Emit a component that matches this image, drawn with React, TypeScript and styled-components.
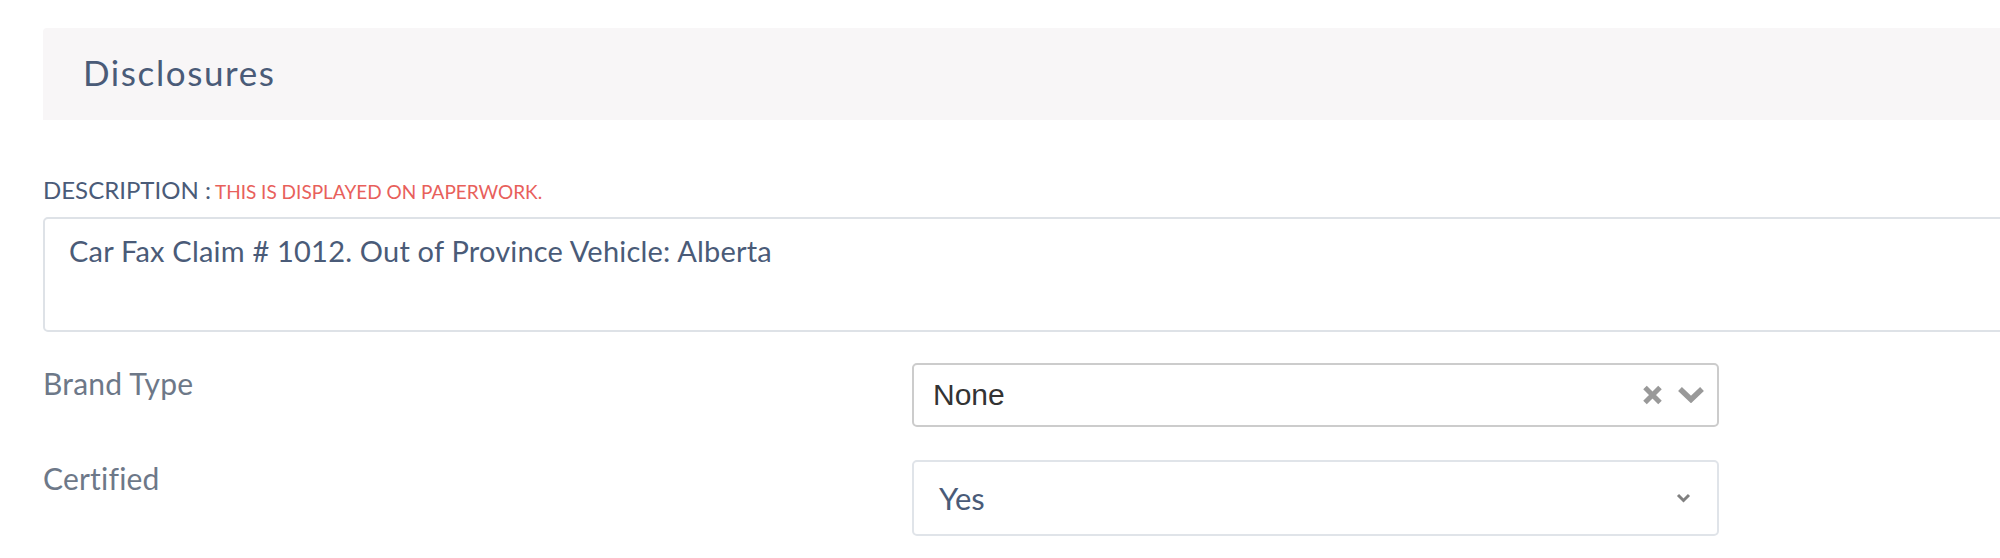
import React from 'react';
import styled, { createGlobalStyle } from 'styled-components';

const GlobalStyle = createGlobalStyle`
  html, body {
    margin: 0;
    padding: 0;
    background: #ffffff;
    overflow: hidden;
  }
  body {
    font-family: Lato, "Open Sans", sans-serif;
  }
`;

const Page = styled.div`
  width: 2000px;
  height: 558px;
  box-sizing: border-box;
  padding: 28px 0 0 43px;
  overflow: hidden;
`;

const Content = styled.div`
  width: 1990px;
`;

const SectionHeader = styled.div`
  height: 92px;
  box-sizing: border-box;
  display: flex;
  align-items: center;
  padding: 0 0 5px 40px;
  background: #f8f6f7;
  border-radius: 4px 0 0 0;
`;

const SectionTitle = styled.h2`
  margin: 0;
  font-size: 35px;
  font-weight: 400;
  letter-spacing: 1.6px;
  color: #4a5b78;
`;

const FieldLabel = styled.div`
  margin-top: 56px;
  display: flex;
  align-items: baseline;
  gap: 4px;
  line-height: 1.2;
`;

const LabelMain = styled.span`
  font-size: 24px;
  color: #4a5b78;
  text-transform: uppercase;
`;

const LabelHint = styled.span`
  font-size: 19px;
  color: #e8605b;
  text-transform: uppercase;
`;

const TextArea = styled.textarea`
  display: block;
  width: 100%;
  height: 115px;
  margin-top: 12px;
  box-sizing: border-box;
  padding: 13px 24px;
  border: 2px solid #dee2e7;
  border-radius: 5px;
  resize: none;
  outline: none;
  font-family: Lato, "Open Sans", sans-serif;
  font-size: 29px;
  letter-spacing: 0.2px;
  line-height: 1.3;
  color: #4a5b78;
  background: #fff;
`;

const FormRow = styled.div<{ $gap: number }>`
  display: grid;
  grid-template-columns: 869px 807px;
  margin-top: ${({ $gap }) => $gap}px;
`;

const RowLabel = styled.div<{ $pad: number }>`
  padding-top: ${({ $pad }) => $pad}px;
  font-size: 30px;
  letter-spacing: 0.2px;
  line-height: 1.2;
  color: #6d7888;
`;

const SelectBox = styled.div<{ $variant: 'clearable' | 'plain' }>`
  display: flex;
  align-items: center;
  box-sizing: border-box;
  height: ${({ $variant }) => ($variant === 'clearable' ? 64 : 76)}px;
  padding: ${({ $variant }) => ($variant === 'clearable' ? '0 12px 0 19px' : '0 26px 0 25px')};
  border: 2px solid ${({ $variant }) => ($variant === 'clearable' ? '#cccccc' : '#e0e4e9')};
  border-radius: 5px;
  background: #fff;
`;

const SelectValue = styled.span<{ $variant: 'clearable' | 'plain' }>`
  flex: 1;
  font-family: ${({ $variant }) =>
    $variant === 'clearable' ? '"Liberation Sans", Arial, sans-serif' : 'Lato, "Open Sans", sans-serif'};
  font-size: ${({ $variant }) => ($variant === 'clearable' ? 30 : 31)}px;
  color: ${({ $variant }) => ($variant === 'clearable' ? '#333333' : '#4a5b78')};
`;

const IconGroup = styled.span`
  display: flex;
  align-items: center;
  gap: 14px;
`;

const ClearIcon = () => (
  <svg width="21" height="20" viewBox="0 0 21 20" aria-hidden="true">
    <path d="M3 2.5 L18 17.5 M18 2.5 L3 17.5" stroke="#999999" strokeWidth="5" strokeLinecap="butt" fill="none" />
  </svg>
);

const HeavyChevron = () => (
  <svg width="28" height="17" viewBox="0 0 28 17" aria-hidden="true">
    <path d="M3 3 L14 13.5 L25 3" stroke="#999999" strokeWidth="5.5" strokeLinejoin="miter" fill="none" />
  </svg>
);

const SmallChevron = () => (
  <svg width="15" height="10" viewBox="0 0 15 10" aria-hidden="true">
    <path d="M2 2 L7.5 7.5 L13 2" stroke="#808080" strokeWidth="3" fill="none" />
  </svg>
);

export default function App() {
  return (
    <>
      <GlobalStyle />
      <Page>
        <Content>
          <SectionHeader>
            <SectionTitle>Disclosures</SectionTitle>
          </SectionHeader>

          <FieldLabel>
            <LabelMain>Description :</LabelMain>
            <LabelHint>This is displayed on paperwork.</LabelHint>
          </FieldLabel>
          <TextArea readOnly value="Car Fax Claim # 1012. Out of Province Vehicle: Alberta" />

          <FormRow $gap={31}>
            <RowLabel $pad={2}>Brand Type</RowLabel>
            <SelectBox $variant="clearable">
              <SelectValue $variant="clearable">None</SelectValue>
              <IconGroup>
                <ClearIcon />
                <HeavyChevron />
              </IconGroup>
            </SelectBox>
          </FormRow>

          <FormRow $gap={33}>
            <RowLabel $pad={0}>Certified</RowLabel>
            <SelectBox $variant="plain">
              <SelectValue $variant="plain">Yes</SelectValue>
              <SmallChevron />
            </SelectBox>
          </FormRow>
        </Content>
      </Page>
    </>
  );
}
